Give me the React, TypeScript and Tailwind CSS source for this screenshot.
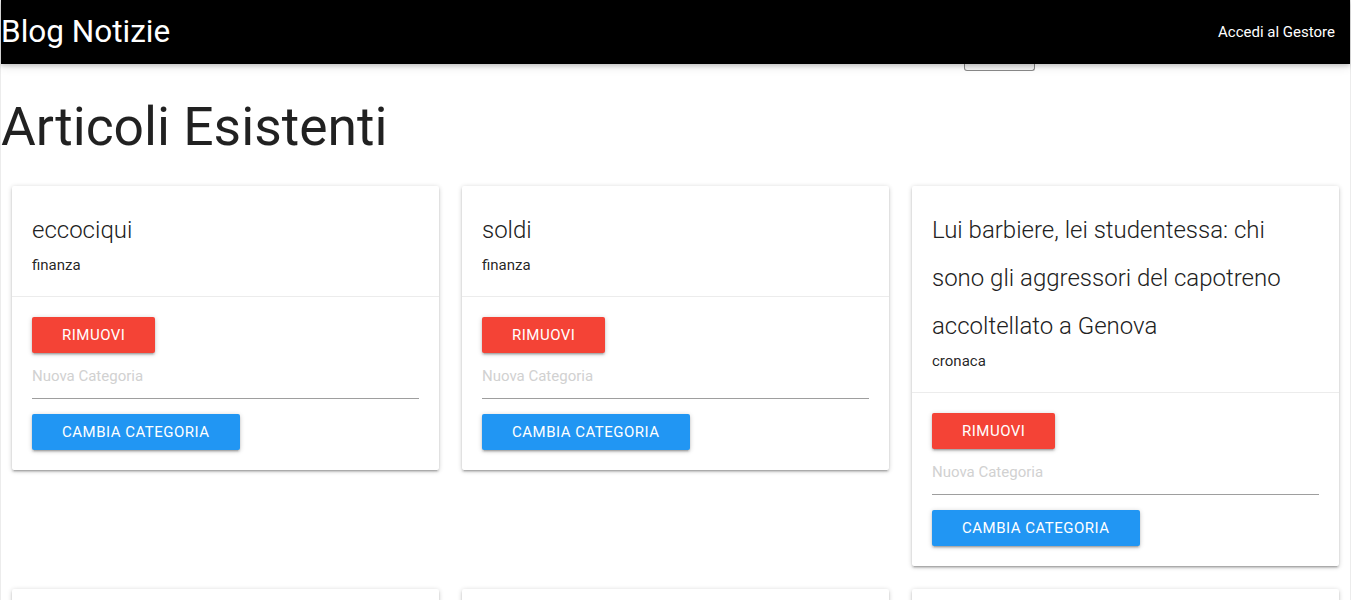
import React from 'react';

interface Article {
    title: string;
    category: string;
}

const articles: Article[] = [
    { title: 'eccociqui', category: 'finanza' },
    { title: 'soldi', category: 'finanza' },
    {
        title: 'Lui barbiere, lei studentessa: chi sono gli aggressori del capotreno accoltellato a Genova',
        category: 'cronaca',
    },
    { title: 'sport', category: 'sport' },
    { title: 'prova', category: 'cronaca' },
    { title: 'meteo', category: 'cronaca' },
];

const shadow = 'shadow-[0_2px_2px_0_rgba(0,0,0,0.14),0_3px_1px_-2px_rgba(0,0,0,0.12),0_1px_5px_0_rgba(0,0,0,0.2)]';

const App: React.FC = () => {
    return (
        <div className="min-h-screen bg-white font-['Roboto',sans-serif] text-[rgba(0,0,0,0.87)] border-x border-[#ececec]">
            {/* Navbar */}
            <nav className="relative z-10 h-16 bg-black text-white flex items-center justify-between shadow-[0_2px_4px_0_rgba(0,0,0,0.16),0_2px_10px_0_rgba(0,0,0,0.12)]">
                <span className="text-[31.5px] leading-[64px]">Blog Notizie</span>
                <a href="#" className="px-[15px] text-[15px] leading-[64px]">
                    Accedi al Gestore
                </a>
            </nav>

            {/* leftover of the form hidden under the navbar */}
            <div className="h-[7px]">
                <div className="ml-[963px] w-[71px] h-[7px] border-x border-b border-[#8a8a8a] rounded-b-[3px] bg-[#f4f4f4]" />
            </div>

            <h2 className="mt-[27px] text-[53.4px] leading-[58.7px] font-normal">Articoli Esistenti</h2>

            <div className="mt-[29px] px-[11px] grid grid-cols-3 gap-x-[23px] gap-y-[23px] items-start">
                {articles.map((a, i) => (
                    <ArticleCard key={i} article={a} />
                ))}
            </div>
        </div>
    );
};

const ArticleCard: React.FC<{ article: Article }> = ({ article }) => {
    return (
        <div className={`bg-white rounded-[2px] ${shadow}`}>
            <div className="p-5 border-b border-[rgba(160,160,160,0.2)]">
                <div className="text-[24px] font-light leading-[48px] text-[#212121]">{article.title}</div>
                <p className="text-[15px] leading-[22px]">{article.category}</p>
            </div>
            <div className="p-5">
                <button
                    className={`h-9 pt-px px-[30px] bg-[#F44336] text-white text-[15px] tracking-[0.5px] uppercase rounded-[2px] ${shadow}`}
                >
                    Rimuovi
                </button>
                <input
                    type="text"
                    placeholder="Nuova Categoria"
                    className="block w-full h-[46px] pt-[2px] border-b border-[#9e9e9e] text-[15px] outline-none placeholder:text-[#d1d1d1]"
                />
                <button
                    className={`mt-[15px] h-9 pt-px px-[30px] bg-[#2196F3] text-white text-[15px] tracking-[0.5px] uppercase rounded-[2px] ${shadow}`}
                >
                    Cambia Categoria
                </button>
            </div>
        </div>
    );
};

export default App;
